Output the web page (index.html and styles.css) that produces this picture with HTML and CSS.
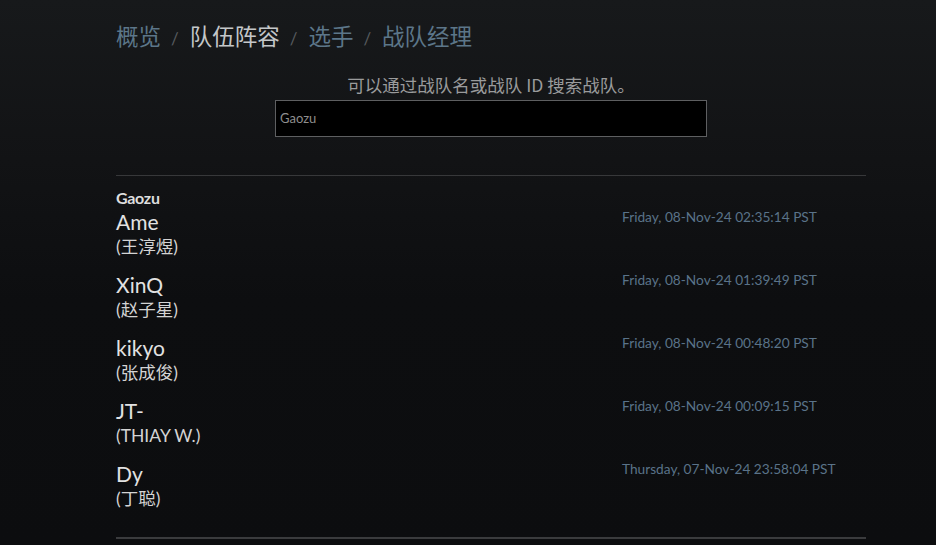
FILE: index.html
```html
<!DOCTYPE html>
<html lang="zh-CN">
<head>
<meta charset="utf-8">
<title>队伍阵容</title>
<link rel="stylesheet" href="styles.css">
</head>
<body>
<div class="page">
  <nav class="crumbs">
    <a class="crumb link">概览</a><span class="sep">/</span><a class="crumb current">队伍阵容</a><span class="sep">/</span><a class="crumb link">选手</a><span class="sep">/</span><a class="crumb link">战队经理</a>
  </nav>
  <section class="search">
    <p class="hint">可以通过战队名或战队 ID 搜索战队。</p>
    <div class="field">Gaozu</div>
  </section>
  <section class="roster">
    <h2 class="team">Gaozu</h2>
    <div class="row">
      <div class="player"><div class="nick">Ame</div><div class="real">(王淳煜)</div></div>
      <div class="date">Friday, 08-Nov-24 02:35:14 PST</div>
    </div>
    <div class="row">
      <div class="player"><div class="nick">XinQ</div><div class="real">(赵子星)</div></div>
      <div class="date">Friday, 08-Nov-24 01:39:49 PST</div>
    </div>
    <div class="row">
      <div class="player"><div class="nick">kikyo</div><div class="real">(张成俊)</div></div>
      <div class="date">Friday, 08-Nov-24 00:48:20 PST</div>
    </div>
    <div class="row">
      <div class="player"><div class="nick">JT-</div><div class="real">(THIAY W.)</div></div>
      <div class="date">Friday, 08-Nov-24 00:09:15 PST</div>
    </div>
    <div class="row">
      <div class="player"><div class="nick">Dy</div><div class="real">(丁聪)</div></div>
      <div class="date">Thursday, 07-Nov-24 23:58:04 PST</div>
    </div>
  </section>
</div>
</body>
</html>
```

FILE: styles.css
```css
html, body {
  margin: 0;
  padding: 0;
}
body {
  width: 936px;
  height: 545px;
  overflow: hidden;
  background: linear-gradient(180deg, #17191b 0px, #121315 160px, #0d0e10 300px, #0c0d0f 545px);
  font-family: Lato, "Noto Sans CJK SC", sans-serif;
  color: #d8d8d8;
}
.page {
  width: 750px;
  margin-left: 116px;
  padding-top: 20px;
}
.crumbs {
  display: flex;
  align-items: baseline;
  font-family: "Noto Sans CJK SC", sans-serif;
  font-size: 22.5px;
  line-height: 30px;
  height: 30px;
}
.crumb {
  text-decoration: none;
}
.crumb.link { color: #5c7689; }
.crumb.current { color: #c4c7c9; }
.sep {
  font-family: Lato, sans-serif;
  font-size: 17px;
  color: #575b5f;
  padding: 0 11px 0 10px;
}
.search {
  display: flex;
  flex-direction: column;
  align-items: center;
  padding-top: 24px;
}
.hint {
  margin: 0;
  font-family: "Noto Sans CJK SC", sans-serif;
  font-size: 17.5px;
  line-height: 22px;
  color: #9a9b9c;
}
.field {
  box-sizing: border-box;
  margin-top: 4px;
  width: 432px;
  height: 37px;
  background: #000;
  border: 1px solid #5e5f61;
  padding: 0 4px;
  font-size: 13px;
  line-height: 35px;
  color: #8e8e8e;
}
.roster {
  margin-top: 38px;
  border-top: 1px solid #37383a;
  border-bottom: 2px solid #3a3b3d;
  padding-top: 12px;
  padding-bottom: 26px;
}
.team {
  margin: 0;
  font-size: 16px;
  line-height: 20px;
  font-weight: 700;
  color: #dedede;
  letter-spacing: -0.3px;
}
.row {
  display: grid;
  grid-template-columns: 506px 1fr;
  align-items: start;
  margin-bottom: 12px;
}
.row:last-child { margin-bottom: 0; }
.nick {
  font-size: 21px;
  line-height: 27px;
  color: #e2e2e2;
}
.real {
  font-size: 17.5px;
  line-height: 24px;
  color: #d4d4d4;
}
.date {
  padding-top: 1px;
  font-size: 13.7px;
  line-height: 16px;
  color: #5a7389;
}
```
